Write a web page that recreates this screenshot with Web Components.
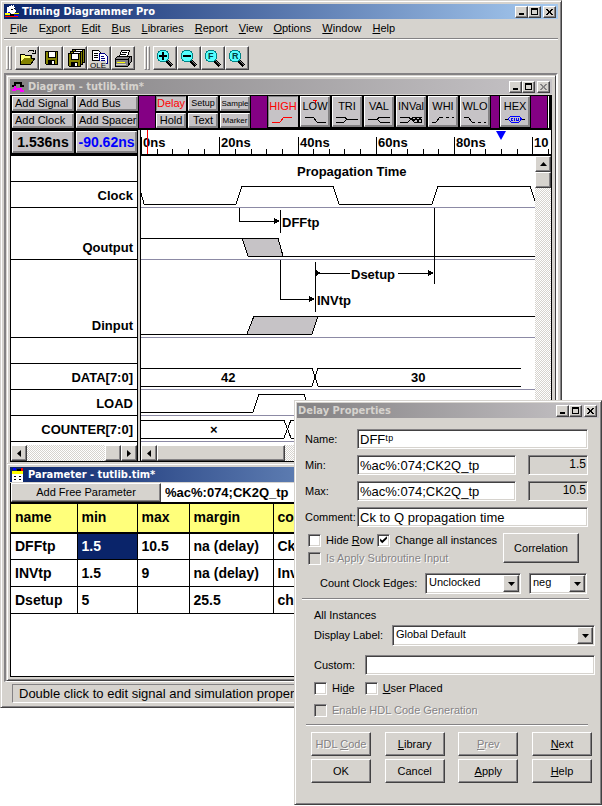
<!DOCTYPE html>
<html lang="en">
<head>
<meta charset="utf-8">
<title>Timing Diagrammer Pro</title>
<style>
html { --face:#d6d3ce; --mid:#848284; --dark:#424142; }
body { margin:0; background:#fff; font:11px/13px "Liberation Sans",Arial,sans-serif; color:#000; }
</style>
</head>
<body>
<timing-app></timing-app>
<script>
const BASE = `
*{box-sizing:border-box}
button,input,select{font:inherit;color:inherit;margin:0;border-radius:0}
button{padding:0;border:0;background:none}
svg{display:block}
u{text-underline-offset:1px}
`;
function define(name, css, html, setup) {
  customElements.define(name, class extends HTMLElement {
    constructor() {
      super();
      const t = document.createElement('template');
      t.innerHTML = `<style>${BASE}${css}</style>${typeof html === 'function' ? html(this) : html}`;
      this.attachShadow({ mode: 'open' }).append(t.content.cloneNode(true));
    }
    connectedCallback() { if (setup) setup(this, this.shadowRoot); }
  });
}

/* Window frame: bevel, title bar, caption buttons, content */
define('win-frame', `
:host{display:flex;flex-direction:column;min-width:0;background:var(--face);border:1px solid;border-color:var(--face) var(--dark) var(--dark) var(--face);
 box-shadow:inset 1px 1px #fff,inset -1px -1px var(--mid);padding:var(--pad,3px)}
header{display:flex;align-items:center;height:15px;flex:none;gap:2px;padding:0 2px 0 0;color:#fff;background:linear-gradient(90deg,#0a246a,#a6caf0);margin-bottom:var(--gap,0)}
:host([inactive]) header{background:linear-gradient(90deg,#848284,#c6c3c6);color:#d6d3ce}
h1{flex:1;margin:0;font:bold 11px/15px "DejaVu Sans Condensed","Noto Sans",sans-serif;white-space:nowrap;padding-left:1px}
nav{display:flex}
nav button{width:13px;height:12px;background:var(--face);border:1px solid;border-color:#fff var(--dark) var(--dark) #fff;box-shadow:inset -1px -1px var(--mid);color:#000}
nav button:last-child{margin-left:2px}
nav button:disabled{color:var(--mid)}
`, el => `<header><slot name="icon"></slot><h1>${el.getAttribute('caption')}</h1><nav>
<button aria-label="Minimize"><svg width="11" height="10" fill="currentColor"><rect x="3" y="6" width="5" height="2"/></svg></button>
<button aria-label="Maximize"><svg width="11" height="10" fill="currentColor" fill-rule="evenodd"><path d="M2 1h7v7h-7zM3 3v4h5v-4z"/></svg></button>
<button aria-label="Close"${el.hasAttribute('noclose') ? ' disabled' : ''}><svg width="11" height="10" shape-rendering="crispEdges" fill="currentColor"><path d="M2 2h2v1h1v1h1v-1h1v-1h2v1h-1v1h-1v1h-1v0h1v1h1v1h1v1h-2v-1h-1v-1h-1v1h-1v1h-2v-1h1v-1h1v-1h0v-1h-1v-1h-1z"/></svg></button>
</nav></header><slot></slot>`);

/* Push button */
define('win-button', `
:host{display:block;min-width:0}
button{display:flex;align-items:center;justify-content:center;width:100%;height:100%;background:var(--face);border:1px solid;border-color:#fff var(--dark) var(--dark) #fff;
 box-shadow:inset -1px -1px var(--mid);white-space:nowrap}
button:disabled{color:var(--mid);text-shadow:1px 1px #fff}
:host([tool]) button{background:#c6c3c6;border-color:#fff var(--mid) var(--mid) #fff;flex-direction:column;overflow:hidden}
:host([left]) button{align-items:flex-start;padding-left:2px}
:host([on]) button{color:#f00;border-color:var(--mid) #c6c3c6 #c6c3c6 var(--mid);box-shadow:none}
`, el => `<button ${el.hasAttribute('disabled') ? 'disabled' : ''} aria-label="${el.getAttribute('name') || ''}"><slot></slot></button>`,
 (el, r) => { if (!el.getAttribute('name')) r.querySelector('button').removeAttribute('aria-label'); });

/* Labelled text box; a second read-only box shows the evaluated number */
define('win-field', `
:host{display:flex;align-items:center;height:20px}
label{flex:none;width:var(--label,51px)}
input{font-size:13px;height:20px;min-width:0;width:0;flex:1;padding:0 0 0 2px;background:#fff;border:1px solid;border-color:var(--mid) #fff #fff var(--mid);
 box-shadow:inset 1px 1px var(--dark),inset -1px -1px var(--face);outline:0}
input[readonly]{flex:none;width:60px;margin-left:12px;text-align:right;background:var(--face);font-size:12px;padding:0 1px 3px 0;box-shadow:inset 1px 1px var(--dark)}
`, el => `<label for="t">${el.getAttribute('label')}</label><input id="t" value="${el.getAttribute('value') || ''}">${
 el.hasAttribute('result') ? `<input readonly aria-label="Result" value="${el.getAttribute('result')}">` : ''}`);

/* Check box */
define('win-check', `
:host{display:block}
label{display:flex;align-items:center;gap:5px;white-space:nowrap;height:14px}
input{appearance:none;flex:none;width:13px;height:13px;background:#fff;border:1px solid;border-color:var(--mid) #fff #fff var(--mid);box-shadow:inset 1px 1px var(--dark),inset -1px -1px var(--face);display:grid}
input:checked::before{content:"";width:9px;height:8px;margin:1px;background:#000;clip-path:polygon(12% 36%,36% 62%,88% 8%,88% 42%,36% 96%,12% 70%)}
:host([disabled]) label{color:var(--mid);text-shadow:1px 1px #fff}
:host([disabled]) input{background:var(--face)}
`, el => `<label><input type="checkbox" ${el.hasAttribute('checked') ? 'checked' : ''} ${el.hasAttribute('disabled') ? 'disabled' : ''}><span><slot></slot></span></label>`);

/* Drop-down */
define('win-select', `
:host{display:flex;align-items:center;height:21px}
label{flex:none;white-space:nowrap}
label:empty{display:none}
div{display:grid;flex:1;height:21px;background:#fff;border:1px solid;border-color:var(--mid) #fff #fff var(--mid);box-shadow:inset 1px 1px var(--dark),inset -1px -1px var(--face);padding:1px}
select,span{grid-area:1/1}
select{appearance:none;background:none;border:0;padding:0 18px 2px 2px;outline:0;width:100%}
span{justify-self:end;width:16px;pointer-events:none;background:var(--face);border:1px solid;border-color:#fff var(--dark) var(--dark) #fff;box-shadow:inset -1px -1px var(--mid);display:grid;place-items:center}
`, el => `<label for="s" style="width:${el.getAttribute('labelwidth') || 0}px">${el.getAttribute('label') || ''}</label><div><select id="s" aria-label="${el.getAttribute('label') || 'Edge'}"><option>${el.getAttribute('value')}</option></select><span><svg width="7" height="4"><path d="M0 0h7L3.5 4z"/></svg></span></div>`);

/* Scroll bar */
define('win-scroll', `
:host{display:flex;height:16px;background:repeating-conic-gradient(#fff 0 25%,#d6d3ce 0 50%) 0 0/2px 2px}
:host([vertical]){flex-direction:column;width:16px;height:auto}
button,i{flex:none;width:16px;height:16px;background:var(--face);border:1px solid;border-color:#fff var(--dark) var(--dark) #fff;box-shadow:inset -1px -1px var(--mid);display:grid;place-items:center}
b{flex:1}
`, el => {
  const v = el.hasAttribute('vertical');
  const a = v ? 'M0 4h7L3.5 0z' : 'M4 0v7L0 3.5z', z = v ? 'M0 0h7L3.5 4z' : 'M0 0v7L4 3.5z';
  const thumb = `<i style="${v ? '' : `width:${el.getAttribute('thumb') || 16}px`}"></i>`;
  const s = v ? 'width="7" height="4"' : 'width="4" height="7"';
  return `<button aria-label="Back"><svg ${s}><path d="${a}"/></svg></button>${el.hasAttribute('end') ? '<b></b>' + thumb : thumb + '<b></b>'}<button aria-label="Forward"><svg ${s}><path d="${z}"/></svg></button>`;
});

define('menu-bar', `
:host{display:flex;gap:11px;padding:0 6px;height:20px;align-items:center;border-bottom:1px solid var(--mid);box-shadow:0 1px #fff}
button{white-space:nowrap}
`, ['<u>F</u>ile','E<u>x</u>port','<u>E</u>dit','<u>B</u>us','<u>L</u>ibraries','<u>R</u>eport','<u>V</u>iew','<u>O</u>ptions','<u>W</u>indow','<u>H</u>elp'].map(t => `<button>${t}</button>`).join(''));

const lens = inner => `<svg width="22" height="22" shape-rendering="crispEdges"><path d="M12 13l6 6" stroke="#000" stroke-width="3"/><path d="M13 13l5 5" stroke="#848284"/><circle cx="9" cy="9" r="6" fill="#5ff" stroke="#008284" stroke-width="1"/>${inner}</svg>`;
const disk = (x, y) => `<path d="M${x} ${y}h12v13h-11l-1-1z" fill="#848200" stroke="#000"/><path d="M${x+3} ${y}h7v6h-7z" fill="#fff" stroke="#000"/><path d="M${x+3} ${y+9}h7v4h-7z" fill="#000"/><path d="M${x+7} ${y+10}h2v3h-2z" fill="#fff"/>`;
define('tool-bar', `
:host{display:flex;align-items:center;height:33px;padding:2px 2px 0;margin-top:1px}
i{width:3px;height:24px;border:1px solid;border-color:#fff var(--mid) var(--mid) #fff}
i+win-button{margin-left:3px}
win-button+i{margin-left:9px}
win-button{width:24px;height:24px}
`, `<i></i><i></i>
<win-button name="Open"><svg width="22" height="22" shape-rendering="crispEdges"><path d="M4 17V7h4l1 1h6v3h4l-4 6z" fill="#848200" stroke="#000"/><path d="M5 15V8h3l1 1h5v2H8z" fill="#ffff7b"/><path d="M12 5l2-2h3l1 2M16 6h3V3" fill="none" stroke="#000"/></svg></win-button>
<win-button name="Save"><svg width="22" height="22" shape-rendering="crispEdges">${disk(5,4)}</svg></win-button>
<win-button name="Save all"><svg width="22" height="22" shape-rendering="crispEdges">${disk(8,2)}${disk(6,4)}${disk(4,6)}</svg></win-button>
<win-button name="Copy OLE"><svg width="22" height="22" shape-rendering="crispEdges"><path d="M4 3h6l2 2v8H4z" fill="#fff" stroke="#000"/><path d="M6 6h4M6 8h4M6 10h4" stroke="#000"/><path d="M11 6h5l3 3v7h-8z" fill="#fff" stroke="#000084"/><path d="M13 9h3M13 11h4M13 13h4" stroke="#000084"/><rect x="2" y="14" width="16" height="7" fill="#d6d3ce"/><text x="2" y="21" font-size="8" font-family="Liberation Sans">OLE</text></svg></win-button>
<win-button name="Print"><svg width="22" height="22" shape-rendering="crispEdges"><path d="M7 10l3-7h8l-3 7z" fill="#fff" stroke="#000"/><path d="M10 5h5M9 7h5" stroke="#000"/><path d="M3 12l3-3h13v6l-3 4H3z" fill="#848284" stroke="#000"/><path d="M3 12h13l3-3M16 12v6" stroke="#000" fill="none"/><path d="M5 15h8" stroke="#ffff00"/><path d="M4 17h10" stroke="#d6d3ce"/></svg></win-button>
<i></i><i></i>
<win-button name="Zoom in">${lens('<path d="M8 5h2v3h3v2h-3v3H8v-3H5V8h3z"/>')}</win-button>
<win-button name="Zoom out">${lens('<path d="M5 8h8v2H5z"/>')}</win-button>
<win-button name="Zoom fit">${lens('<text x="6" y="12" font-size="9" font-weight="bold" fill="#004040">F</text>')}</win-button>
<win-button name="Zoom range">${lens('<text x="6" y="12" font-size="9" font-weight="bold" fill="#004040">R</text>')}</win-button>`);

/* Signal-state buttons above the waveforms; LOW carries the red "next state" tick */
const states = [
 ['HIGH','M2 8h8l4-5h8',' on'],['LOW','M3 3h8l4 5h9','','<path d="M11 -14h4M13 -14v3" stroke="#f00"/>'],['TRI','M2 3h8l3 2h11M2 8h8l3-3',''],['VAL','M2 5h9l3-2h10M11 5l3 3h10',''],
 ['INVal','M2 3h8l3 2 3-2h8M2 8h8l3-3 3 3h8M13 5h11M14 4l2 3 2-4 2 5 2-5 2 5',''],['WHI','M2 8h4l4-5h3M16 3h3M22 3h2',''],['WLO','M2 3h4l4 5h3M16 8h3M22 8h2','']];
define('state-bar', `
:host{display:flex;height:32px;background:#000;overflow:hidden;margin-bottom:2px}
.pair{display:grid;grid-template:15px 15px/62px 62px;gap:2px;padding:0 1px}
.six{display:grid;grid-template:15px 15px/30px 30px 30px;gap:2px;padding:0 1px}
.row{display:flex;gap:2px;padding:0 1px;font-size:11px;line-height:15px}
.row win-button{width:30px;height:31px}
svg{overflow:visible}
b{background:#840084;width:16px;flex:none}
b.s{width:8px}
.setup{font-size:9px}
.nar{font-size:8px}
em{flex:1;background:linear-gradient(#fff 0 0) 1px 0/1px 100% no-repeat}
`, `<div class="pair"><win-button tool left>Add Signal</win-button><win-button tool left>Add Bus</win-button><win-button tool left>Add Clock</win-button><win-button tool left>Add Spacer</win-button></div><b></b>
<div class="six"><win-button tool on>Delay</win-button><win-button tool class="setup">Setup</win-button><win-button tool class="nar">Sample</win-button><win-button tool>Hold</win-button><win-button tool>Text</win-button><win-button tool class="nar">Marker</win-button></div><b></b>
<div class="row">${states.map(s => `<win-button tool${s[2]}>${s[0]}<svg width="26" height="11" fill="none" stroke="currentColor" shape-rendering="crispEdges"><path d="${s[1]}"/>${s[3] || ''}</svg></win-button>`).join('')}</div><b class="s"></b>
<div class="row"><win-button tool>HEX<svg width="26" height="11" fill="none" stroke="#000" shape-rendering="crispEdges"><path d="M3 5h3M20 5h3"/><path d="M6 5l3-3h8l3 3-3 3H9z" stroke="#00f"/><path d="M9 4h2M9 5h1M9 6h2M12 4v3M14 4v2h2M16 4v3M18 4v3" stroke="#00f"/></svg></win-button></div><b></b><em></em>`);

/* Time ruler */
define('time-ruler', `:host{display:block;height:26px;background:#fff;border-bottom:2px solid #000}
svg{width:100%;height:24px}text{font:bold 13px "Liberation Sans",sans-serif}`,
 () => {
  let o = '';
  for (let i = 0; i <= 26; i++) {
    const x = Math.round(i * 15.65), major = i % 5 === 0;
    o += `<rect x="${x}" y="${major ? 7 : 19}" width="1" height="${major ? 17 : 5}"/>`;
    if (major) o += `<text x="${x + 2}" y="17">${i < 25 ? i * 4 + 'ns' : '10'}</text>`;
  }
  return `<svg>${o}<rect x="6" width="1" height="24" fill="#f00"/><path d="M355 1h10L360 10z" fill="#00f"/></svg>`;
 });

/* Waveforms; coordinates are diagram pixels */
define('wave-view', `:host{display:block;min-width:0;background:#fff}
svg{width:100%;height:286px}text{font:bold 13px "Liberation Sans",sans-serif;fill:#000;stroke:none}`,
`<svg><g transform="translate(-141 -156)" fill="none" stroke="#000" shape-rendering="crispEdges">
<g fill="#8c8aa5" stroke="none">${[207,259,337,389,415,441].map(y => `<rect x="141" y="${y}" width="1000" height="1"/>`).join('')}</g>
<path d="M141 193l3 11h92l6-18h91l6 18h93l6-18h92l6 18"/>
<path d="M239 208v13h35M280 210v23M434 208v76M280 260v39h29M315 262v50M320 273h109"/>
<path d="M274 218l6 3-6 3zM309 296l6 3-6 3zM428 270l6 3-6 3zM316 270l5 3-5 3z" fill="#000" stroke="none"/>
<path d="M242 238h36l5 18h-35z" fill="#c6c3c6"/><path d="M141 238h101M283 256h900"/>
<path d="M254 316h64l-6 18h-65z" fill="#c6c3c6"/><path d="M141 334h106M318 316h900"/>
<path d="M141 368h171l6 18h203M141 386h171l6-18h203"/>
<path d="M141 412h112l6-18h45l6 18h300"/>
<path d="M141 420h143l7 18h200M141 438h143l7-18h200"/>
<rect x="350" y="266" width="48" height="14" fill="#fff" stroke="none"/>
<text x="297" y="176">Propagation Time</text><text x="282" y="227">DFFtp</text><text x="351" y="279">Dsetup</text><text x="317" y="305">INVtp</text>
<text x="221" y="382">42</text><text x="411" y="382">30</text><text x="210" y="434">×</text>
</g></svg>`);

define('signal-list', `:host{display:block;background:#fff;font:bold 13px/15px "Liberation Sans",sans-serif;text-align:right}
ul{list-style:none;margin:0;padding:0}
li{display:flex;align-items:flex-end;justify-content:flex-end;border-bottom:1px solid #000;padding:0 4px 4px 0;height:26px}
.x2{height:52px}.x3{height:78px}`,
`<ul><li></li><li>Clock</li><li class="x2">Qoutput</li><li class="x3">Dinput</li><li></li><li>DATA[7:0]</li><li>LOAD</li><li>COUNTER[7:0]</li></ul>`);

define('diagram-pane', `
:host{display:block;background:#000;border:1px solid #000}
main{display:grid;grid-template-columns:126px 4px minmax(0,1fr)}
.split{background:var(--face);border:1px solid #000;border-width:0 1px}
.times{display:grid;grid-template-columns:62px 61px;gap:2px;padding:1px 0 3px 1px;height:26px;font:bold 14px "Liberation Sans",sans-serif;background:#000}
.times win-button+win-button{color:#00f}
.waves{display:grid;grid-template-columns:minmax(0,1fr) 16px}
win-scroll:not([vertical]){border-top:3px solid #fff;height:19px}
`, `<state-bar></state-bar><main>
<section><div class="times"><win-button tool>1.536ns</win-button><win-button tool>-90.62ns</win-button></div><signal-list></signal-list><win-scroll end></win-scroll></section>
<div class="split"></div>
<section><time-ruler></time-ruler><div class="waves"><wave-view></wave-view><win-scroll vertical></win-scroll></div><win-scroll thumb="128"></win-scroll></section>
</main>`);

define('param-pane', `
:host{display:block;background:#fff;border:1px solid #000;border-top:0;min-height:194px}
.top{display:flex;height:20px;background:#000}
win-button{width:150px;height:19px}
input{flex:1;height:19px;border:0;background:#fff;font:bold 13px "Liberation Sans",sans-serif;padding:0 0 0 4px;outline:0}
table{width:100%;table-layout:fixed;border-collapse:collapse;font:bold 14px/16px "Liberation Sans",sans-serif}
th,td{text-align:left;height:27px;padding:0 0 1px 4px;border:1px solid #000;border-width:1px 0 1px 1px;white-space:nowrap;overflow:hidden}
th:first-child,td:first-child{border-left:0}
th{background:#ffff7b;height:29px;border-bottom-width:2px}
td.on{background:#0a246a;color:#fff}
`, `<div class="top"><win-button>Add Free Parameter</win-button><input aria-label="Value" value="%ac%:074;CK2Q_tp"></div>
<table><colgroup><col style="width:66px"><col style="width:60px"><col style="width:52px"><col style="width:84px"><col></colgroup>
<thead><tr><th>name</th><th>min</th><th>max</th><th>margin</th><th>com</th></tr></thead>
<tbody><tr><td>DFFtp</td><td class="on">1.5</td><td>10.5</td><td>na (delay)</td><td>Ck</td></tr>
<tr><td>INVtp</td><td>1.5</td><td>9</td><td>na (delay)</td><td>Inv</td></tr>
<tr><td>Dsetup</td><td>5</td><td></td><td>25.5</td><td>ch</td></tr></tbody></table>`);

define('delay-form', `
:host{display:block;padding:11px 4px 19px 5px}
form{display:flex;flex-direction:column}
.fields{display:grid;gap:6px;padding:0 7px 0 3px;--label:52px}
.checks{display:grid;grid-template-columns:69px minmax(0,1fr) 76px;align-items:start;gap:4px 0;padding:6px 16px 0 6px}
.checks .wide{grid-column:1/3}
.checks win-button{grid-area:1/3/3/4;height:30px}
.row{display:flex;align-items:center}
.edges{gap:8px;padding:8px 8px 0 18px}
.edges :first-child{flex:1}.edges :last-child{width:58px}
hr{margin:4px 6px 0 0;height:2px;border:0;border-top:1px solid var(--mid);border-bottom:1px solid #fff;width:auto}
.all{padding:9px 0 0 12px}
p{margin:0 0 3px}
.all win-field{margin-top:9px}
.bools{gap:10px;margin-top:6px}
.all>win-check{margin-top:8px}
.last{margin:7px 7px 0 4px}
.cmds{display:grid;grid-template-columns:60px 60px 60px 60px;gap:3px 12px;justify-content:space-between;padding:6px 3px 0 9px}
.cmds win-button{height:24px}
`, `<form onsubmit="return false">
<div class="fields"><win-field label="Name:" value="DFFᵗᵖ"></win-field><win-field label="Min:" value="%ac%:074;CK2Q_tp" result="1.5"></win-field><win-field label="Max:" value="%ac%:074;CK2Q_tp" result="10.5"></win-field><win-field label="Comment:" value="Ck to Q propagation time"></win-field></div>
<div class="checks"><win-check>Hide <u>R</u>ow</win-check><win-check checked>Change all instances</win-check><win-button>Correlation</win-button><win-check disabled class="wide">Is Apply Subroutine Input</win-check></div>
<div class="row edges"><win-select label="Count Clock Edges:" labelwidth="105" value="Unclocked"></win-select><win-select value="neg"></win-select></div>
<hr>
<div class="all"><p>All Instances</p><win-select label="Display Label:" labelwidth="78" value="Global Default"></win-select><win-field label="Custom:"></win-field>
<div class="row bools"><win-check>Hi<u>d</u>e</win-check><win-check><u>U</u>ser Placed</win-check></div>
<win-check disabled>Enable HDL Code Generation</win-check></div>
<hr class="last">
<div class="cmds"><win-button disabled><span>HDL <u>C</u>ode</span></win-button><win-button><span><u>L</u>ibrary</span></win-button><win-button disabled><span><u>P</u>rev</span></win-button><win-button><span><u>N</u>ext</span></win-button>
<win-button>OK</win-button><win-button>Cancel</win-button><win-button><span><u>A</u>pply</span></win-button><win-button><span><u>H</u>elp</span></win-button></div>
</form>`);

define('timing-app', `
:host{display:block;position:relative;min-height:806px}
.main{margin-right:40px}
.mdi{border:2px solid;border-color:var(--mid) #fff #fff var(--mid);box-shadow:inset 1px 1px var(--dark);display:flex;flex-direction:column;border-bottom-width:1px}
.child{--gap:1px}
.child.first{border-bottom:0;box-shadow:inset 1px 1px #fff;padding-bottom:1px}
.dialog{position:absolute;right:0;top:400px;width:308px;--pad:2px}
footer{margin:2px 4px 1px 8px;height:19px;border:1px solid;border-color:var(--mid) #fff #fff var(--mid);font-size:13px;line-height:17px;padding-left:6px;white-space:nowrap;overflow:hidden}
`, `<win-frame class="main" caption="Timing Diagrammer Pro">
<svg slot="icon" width="15" height="15" shape-rendering="crispEdges"><path d="M1 9h5v2H1zM10 9h5v1h-5z" fill="#ff0"/><path d="M1 12h13v1H1z" fill="#f00"/><path d="M2 8h4v1H2zM10 11h5v1h-5z" fill="#00f"/><path d="M3 3l3-1 1-1 1 1 1-1 1 1 1 2 1 3-1 2-3 1-3-2-2 1z" fill="#fff"/><path d="M7 5h2v1H7zM10 4h1v1h-1zM6 10h4v2H6z"/></svg>
<menu-bar></menu-bar><tool-bar></tool-bar>
<div class="mdi">
<win-frame class="child first" inactive noclose caption="Diagram - tutlib.tim*"><svg slot="icon" width="15" height="15" shape-rendering="crispEdges" fill="none" stroke-width="2"><path d="M2 7h3V4h6v3h3" stroke="#000"/><path d="M2 11h3V8h1M6 10h5v2h3" stroke="#f0f"/></svg><diagram-pane></diagram-pane></win-frame>
<win-frame class="child" caption="Parameter - tutlib.tim*"><svg slot="icon" width="15" height="15" shape-rendering="crispEdges"><path d="M2 6h11v9H2z" fill="#fff"/><path d="M2 4h11v3H2z" fill="#ff0"/><path d="M3 1h3v2H3z" fill="#00f"/><path d="M7 2h4v2H7z" fill="#000"/><path d="M11 1h2v3h-2z" fill="#f00"/><path d="M4 9h2v1H4zM9 9h2v1H9zM4 12h2v1H4zM9 12h2v1H9z"/></svg><param-pane></param-pane></win-frame>
</div>
<footer>Double click to edit signal and simulation properties</footer>
</win-frame>
<win-frame class="dialog" inactive caption="Delay Properties"><delay-form></delay-form></win-frame>`);
</script>
</body>
</html>
